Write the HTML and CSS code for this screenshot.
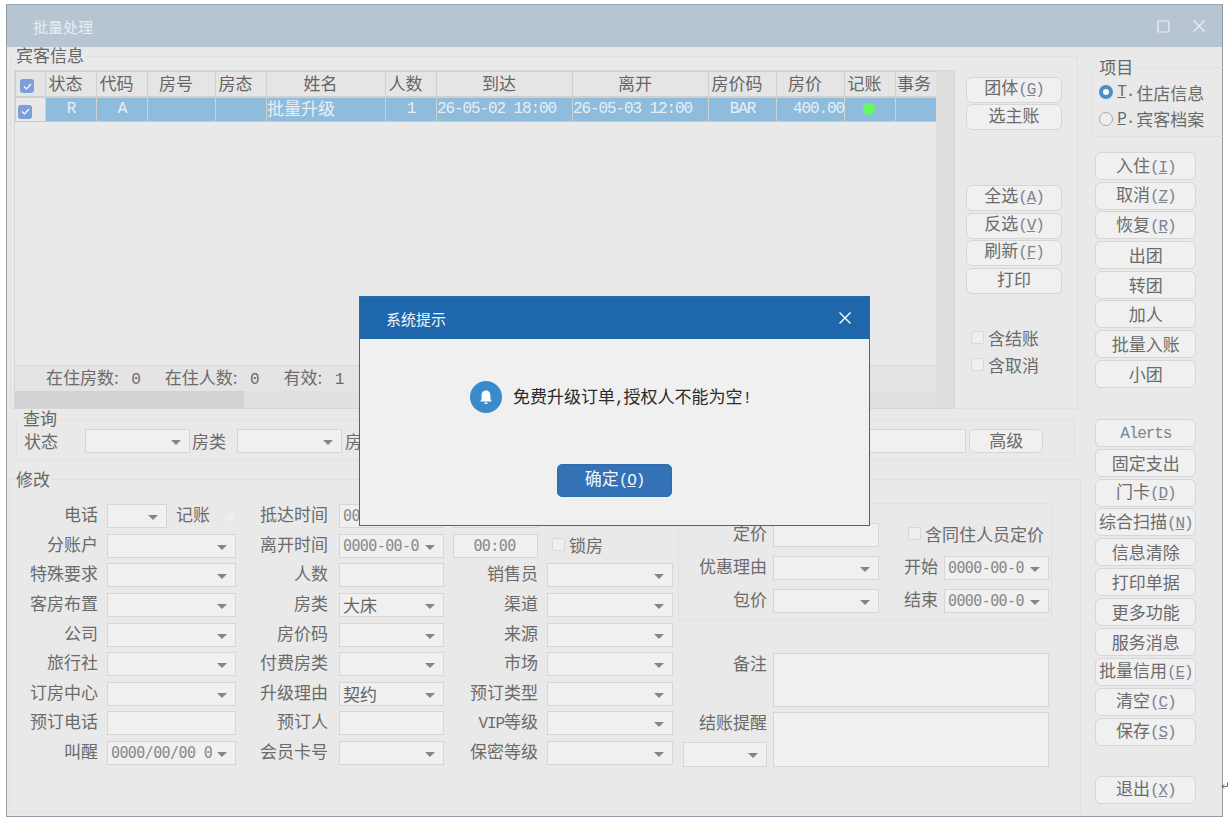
FILE: index.html
```html
<!DOCTYPE html>
<html>
<head>
	<meta charset="UTF-8">
	<title>批量处理</title>
	<link rel="stylesheet" href="styles.css">
</head>
<body>
<div class="win">
	<div class="titlebar">
		<span class="title">批量处理</span>
		<svg class="win-btn" width="13" height="13" viewBox="0 0 13 13"><rect x="1" y="1" width="11" height="11" rx="1" fill="none" stroke="#eef2f5" stroke-width="1.2"/></svg>
		<svg class="win-btn" width="14" height="14" viewBox="0 0 14 14"><path d="M1.5 1.5 L12.5 12.5 M12.5 1.5 L1.5 12.5" stroke="#eef2f5" stroke-width="1.2"/></svg>
	</div>
	<div class="content">
		<div class="left-col">
			<fieldset class="guest">
				<legend>宾客信息</legend>
				<div class="grid-box">
					<div class="grid-main">
						<table class="guest-table">
							<colgroup>
								<col class="w30"><col class="w51"><col class="w51"><col class="w68"><col class="w51"><col class="w119"><col class="w51"><col class="w136"><col class="w136"><col class="w68"><col class="w68"><col class="w51"><col class="w42">
							</colgroup>
							<thead>
								<tr>
									<th class="check-head"><span class="blue-check"><svg width="11" height="11" viewBox="0 0 11 11"><path d="M2 5.5 L4.5 8 L9 3" fill="none" stroke="#fff" stroke-width="1.2"/></svg></span></th>
									<th>状态</th><th>代码</th><th>房号</th><th>房态</th><th>姓名</th><th>人数</th><th>到达</th><th>离开</th><th>房价码</th><th>房价</th><th>记账</th><th class="last-head">事务</th>
								</tr>
							</thead>
							<tbody>
								<tr>
									<td class="check-cell"><span class="blue-check"><svg width="11" height="11" viewBox="0 0 11 11"><path d="M2 5.5 L4.5 8 L9 3" fill="none" stroke="#fff" stroke-width="1.2"/></svg></span></td>
									<td class="lt c">R</td><td class="lt c">A</td><td></td><td></td><td class="name">批量升级</td><td class="lt c">1</td>
									<td class="lt">26-05-02 18:00</td><td class="lt">26-05-03 12:00</td><td class="lt c">BAR</td><td class="lt r">400.00</td>
									<td class="dot-cell"><span class="green-dot"></span></td><td></td>
								</tr>
							</tbody>
						</table>
						<div class="grid-empty"></div>
						<div class="status-row">
							<span>在住房数:<span class="lt">&nbsp;0</span></span>
							<span>在住人数:<span class="lt">&nbsp;0</span></span>
							<span>有效:<span class="lt">&nbsp;1</span></span>
						</div>
						<div class="hscroll"><div class="hthumb"></div></div>
					</div>
					<div class="vscroll"></div>
				</div>
				<div class="side-col">
					<div class="btn-stack">
						<button class="btn side-btn">团体<span class="lt">(<u>G</u>)</span></button>
						<button class="btn side-btn">选主账</button>
					</div>
					<div class="btn-stack second">
						<button class="btn side-btn">全选<span class="lt">(<u>A</u>)</span></button>
						<button class="btn side-btn">反选<span class="lt">(<u>V</u>)</span></button>
						<button class="btn side-btn">刷新<span class="lt">(<u>F</u>)</span></button>
						<button class="btn side-btn">打印</button>
					</div>
					<div class="side-checks">
						<div class="check-row"><span class="check"></span>含结账</div>
						<div class="check-row"><span class="check"></span>含取消</div>
					</div>
				</div>
			</fieldset>

			<fieldset class="query">
				<legend>查询</legend>
				<div class="query-row">
					<span class="q-label">状态</span>
					<div class="ctl combo q-combo"></div>
					<span class="q-label q-label2">房类</span>
					<div class="ctl combo q-combo"></div>
					<span class="q-label q-label3">房号</span>
					<div class="ctl q-fill"></div>
					<button class="btn q-btn">高级</button>
				</div>
			</fieldset>

			<fieldset class="edit">
				<legend>修改</legend>
				<div class="edit-wrap">
					<div class="form-grid">
						<span class="lb">电话</span>
						<div class="phone-cell">
							<div class="ctl combo phone"></div>
							<span class="phone-txt">记账</span>
							<span class="white-dot"></span>
						</div>
						<span class="lb">抵达时间</span><div class="ctl combo date">0000-00-0</div>
						<div class="ctl date"></div><span></span>

						<span class="lb">分账户</span><div class="ctl combo"></div>
						<span class="lb">离开时间</span><div class="ctl combo date">0000-00-0</div>
						<div class="ctl date time">00:00</div>
						<div class="check-row lock"><span class="check"></span>锁房</div>

						<span class="lb">特殊要求</span><div class="ctl combo"></div>
						<span class="lb">人数</span><div class="ctl"></div>
						<span class="lb">销售员</span><div class="ctl combo"></div>

						<span class="lb">客房布置</span><div class="ctl combo"></div>
						<span class="lb">房类</span><div class="ctl combo dark">大床</div>
						<span class="lb">渠道</span><div class="ctl combo"></div>

						<span class="lb">公司</span><div class="ctl combo"></div>
						<span class="lb">房价码</span><div class="ctl combo"></div>
						<span class="lb">来源</span><div class="ctl combo"></div>

						<span class="lb">旅行社</span><div class="ctl combo"></div>
						<span class="lb">付费房类</span><div class="ctl combo"></div>
						<span class="lb">市场</span><div class="ctl combo"></div>

						<span class="lb">订房中心</span><div class="ctl combo"></div>
						<span class="lb">升级理由</span><div class="ctl combo dark">契约</div>
						<span class="lb">预订类型</span><div class="ctl combo"></div>

						<span class="lb">预订电话</span><div class="ctl"></div>
						<span class="lb">预订人</span><div class="ctl"></div>
						<span class="lb"><span class="lt">VIP</span>等级</span><div class="ctl combo"></div>

						<span class="lb">叫醒</span><div class="ctl combo date">0000/00/00 0</div>
						<span class="lb">会员卡号</span><div class="ctl combo"></div>
						<span class="lb">保密等级</span><div class="ctl combo"></div>
					</div>
					<div class="edit-right">
						<div class="price-panel">
							<span class="lb">定价</span><div class="ctl"></div>
							<div class="check-row same"><span class="check"></span>含同住人员定价</div>
							<span class="lb">优惠理由</span><div class="ctl combo"></div>
							<span class="lb">开始</span><div class="ctl combo date">0000-00-0</div>
							<span class="lb">包价</span><div class="ctl combo"></div>
							<span class="lb">结束</span><div class="ctl combo date">0000-00-0</div>
						</div>
						<div class="notes">
							<span class="lb top">备注</span><div class="ctl note"></div>
							<div class="remind">
								<span class="lb top">结账提醒</span>
								<div class="ctl combo small"></div>
							</div>
							<div class="ctl note"></div>
						</div>
					</div>
				</div>
			</fieldset>
		</div>

		<div class="right-col">
			<fieldset class="project">
				<legend>项目</legend>
				<div class="radio-row"><span class="radio on"></span><span class="lt"><u>T</u>.</span>住店信息</div>
				<div class="radio-row"><span class="radio"></span><span class="lt"><u>P</u>.</span>宾客档案</div>
			</fieldset>
			<div class="btn-col">
				<button class="btn">入住<span class="lt">(<u>I</u>)</span></button>
				<button class="btn">取消<span class="lt">(<u>Z</u>)</span></button>
				<button class="btn">恢复<span class="lt">(<u>R</u>)</span></button>
				<button class="btn">出团</button>
				<button class="btn">转团</button>
				<button class="btn">加人</button>
				<button class="btn">批量入账</button>
				<button class="btn">小团</button>
			</div>
			<div class="btn-col gap-top">
				<button class="btn"><span class="lt">Alerts</span></button>
				<button class="btn">固定支出</button>
				<button class="btn">门卡<span class="lt">(<u>D</u>)</span></button>
				<button class="btn">综合扫描<span class="lt">(<u>N</u>)</span></button>
				<button class="btn">信息清除</button>
				<button class="btn">打印单据</button>
				<button class="btn">更多功能</button>
				<button class="btn">服务消息</button>
				<button class="btn">批量信用<span class="lt">(<u>E</u>)</span></button>
				<button class="btn">清空<span class="lt">(<u>C</u>)</span></button>
				<button class="btn">保存<span class="lt">(<u>S</u>)</span></button>
			</div>
			<button class="btn exit">退出<span class="lt">(<u>X</u>)</span></button>
		</div>
	</div>

	<div class="dialog">
		<div class="dialog-head">
			<span>系统提示</span>
			<svg width="14" height="14" viewBox="0 0 14 14"><path d="M1.5 1.5 L12.5 12.5 M12.5 1.5 L1.5 12.5" stroke="#fff" stroke-width="1.4"/></svg>
		</div>
		<div class="dialog-msg">
			<span class="bell">
				<svg width="18" height="18" viewBox="0 0 18 18"><path d="M9 2.5 C5.8 2.5 4.6 5 4.6 7.5 V11 L3.2 13.6 H14.8 L13.4 11 V7.5 C13.4 5 12.2 2.5 9 2.5 Z" fill="#fff"/><path d="M7.2 14.6 H10.8 C10.6 15.7 9.9 16.2 9 16.2 C8.1 16.2 7.4 15.7 7.2 14.6 Z" fill="#fff"/></svg>
			</span>
			<span class="msg-text">免费升级订单<span class="lt">,</span>授权人不能为空<span class="lt">!</span></span>
		</div>
		<div class="dialog-foot">
			<button class="ok-btn">确定<span class="lt">(<u>O</u>)</span></button>
		</div>
	</div>

	<svg class="grip" width="8" height="8" viewBox="0 0 8 8"><path d="M6.5 0.5 V4.5 H1 M3 2.5 L1 4.5 L3 6.5" fill="none" stroke="#666" stroke-width="1"/></svg>
</div>
</body>
</html>
```

FILE: styles.css
```css
* {
	box-sizing: border-box;
}

body {
	margin: 0;
	background: #fff;
	font-family: "Noto Sans CJK SC", sans-serif;
	font-size: 17px;
	color: #6b6b6b;
	overflow: hidden;
}

.lt {
	font-family: "Liberation Mono", monospace;
	font-size: 16px;
	letter-spacing: -1.1px;
}

.win {
	position: relative;
	width: 1217px;
	height: 813px;
	margin: 4px 0 0 6px;
	border: 1px solid #929ca6;
	border-top-color: #9aa5b0;
	background: #e9e9e9;
	display: flex;
	flex-direction: column;
}

.titlebar {
	height: 42px;
	background: #b7c5d3;
	display: flex;
	align-items: center;
	padding: 0 16px 0 26px;
	flex: none;
}

.title {
	flex: 1;
	font-size: 15px;
	color: #e8edf1;
}

.win-btn {
	margin-left: 22px;
}

.content {
	flex: 1;
	display: flex;
	min-height: 0;
}

.left-col {
	width: 1074px;
	margin-left: 2px;
	display: flex;
	flex-direction: column;
	padding-bottom: 3px;
}

fieldset {
	margin: 0;
	padding: 0;
	border: 1px solid #e1e1e1;
	min-width: 0;
}

legend {
	padding: 0 1px;
	margin-left: 1px;
	height: 18px;
	line-height: 16px;
	color: #666;
}

/* guest block */
.guest {
	height: 362px;
	margin-left: 1px;
	margin-right: 3px;
	padding: 5px 0 0 3px;
	display: flex;
	gap: 11px;
}

.grid-box {
	width: 941px;
	height: 339px;
	display: flex;
	border: 1px solid #d6d6d6;
}

.grid-main {
	flex: 1;
	display: flex;
	flex-direction: column;
	min-width: 0;
}

.vscroll {
	width: 18px;
	background: #dedede;
}

.guest-table {
	border-collapse: collapse;
	table-layout: fixed;
	width: 921px;
}

.w30 { width: 30px; }
.w42 { width: 42px; }
.w51 { width: 51px; }
.w68 { width: 68px; }
.w119 { width: 119px; }
.w136 { width: 136px; }

.guest-table th,
.guest-table td {
	padding: 0;
	height: 25px;
	border: 1px solid #d0d0d0;
	font-weight: normal;
	white-space: nowrap;
}

.guest-table th {
	background: #e5e5e5;
	border-bottom-width: 2px;
	text-align: center;
	color: #666;
	line-height: 20px;
	padding: 0 11px 2px 0;
}

.guest-table th.check-head {
	padding: 0 7px 0 0;
}

.guest-table th.last-head {
	padding-right: 5px;
}

.guest-table td {
	background: #8fbbdd;
	color: #e6eff6;
	line-height: 20px;
	border-bottom-color: #c4ccd2;
}

.guest-table td.name {
	padding-bottom: 3px;
}

.guest-table .check-cell {
	background: #e9e9e9;
	text-align: center;
	padding-right: 11px;
}

.guest-table td.c,
.guest-table td.dot-cell {
	text-align: center;
}

.guest-table td.r {
	text-align: right;
}

.blue-check {
	display: inline-flex;
	align-items: center;
	justify-content: center;
	width: 14px;
	height: 14px;
	border-radius: 3px;
	background: #7c9fdc;
	vertical-align: middle;
}

.green-dot {
	display: inline-block;
	width: 12px;
	height: 12px;
	margin: 0 2px 5px 0;
	border-radius: 50%;
	background: #66fb5c;
	vertical-align: middle;
}

.grid-empty {
	flex: 1;
}

.status-row {
	height: 26px;
	background: #e4e4e4;
	border-top: 1px solid #d6d6d6;
	padding: 0 0 4px 31px;
	display: flex;
	gap: 25px;
	align-items: center;
}

.status-row .lt {
	padding-left: 4px;
}

.hscroll {
	height: 17px;
	background: #e0e0e0;
}

.hthumb {
	width: 229px;
	height: 100%;
	background: #d2d2d2;
}

.side-col {
	width: 96px;
	padding-top: 7px;
}

.btn-stack {
	display: flex;
	flex-direction: column;
	gap: 1px;
}

.btn-stack.second {
	margin-top: 55px;
	gap: 1.7px;
}

.side-checks {
	margin-top: 30px;
	padding-left: 5px;
}

.check-row {
	display: flex;
	align-items: center;
	height: 27px;
	gap: 4px;
	white-space: nowrap;
}

.check {
	width: 13px;
	height: 13px;
	border: 1px solid #d8d8d8;
	border-radius: 2px;
	background: #efefef;
	flex: none;
}

.btn {
	display: block;
	width: 100%;
	height: 28px;
	padding: 0;
	border: 1px solid #d6d6d6;
	border-radius: 6px;
	background: #f0f0f0;
	font-family: inherit;
	font-size: 17px;
	line-height: 22px;
	color: #6b6b6b;
	white-space: nowrap;
}

.btn .lt {
	color: #7c8492;
}

.side-btn {
	height: 26px;
	padding-bottom: 4px;
	line-height: 18px;
}

/* query block */
.query {
	height: 50px;
	margin: 1px 6px 0 7px;
	padding: 1px 0 0 7px;
}

.query legend {
	margin-left: -2px;
}

.query-row {
	display: flex;
	align-items: center;
	height: 24px;
}

.q-label {
	width: 61px;
	line-height: 20px;
	padding-bottom: 1px;
}

.q-label2 {
	width: 47px;
	padding-left: 2px;
}

.q-label3 {
	width: 37px;
	padding-left: 3px;
}

.q-combo {
	width: 105px;
}

.q-fill {
	flex: 1;
}

.q-btn {
	width: 74px;
	height: 24px;
	padding-bottom: 3px;
	line-height: 18px;
	margin: 0 31px 0 3px;
}

.ctl {
	height: 24px;
	min-width: 0;
	border: 1px solid #d6d6d6;
	background: #f0f0f0;
	position: relative;
	line-height: 22px;
	padding-left: 3px;
	white-space: nowrap;
}

.combo::after {
	content: "";
	position: absolute;
	right: 8px;
	top: 10px;
	border-left: 5px solid transparent;
	border-right: 5px solid transparent;
	border-top: 5px solid #858585;
}

.date {
	font-family: "DejaVu Sans Mono", monospace;
	font-size: 15px;
	letter-spacing: -0.6px;
	color: #8a8a8a;
}

.date.combo {
	padding-right: 18px;
}

.time {
	text-align: center;
	padding-right: 5px;
}

.dark {
	color: #666;
}

/* edit block */
.edit {
	flex: 1;
	margin: 10px 0 0 0;
	padding: 16px 0 0 0;
}

.edit legend {
	margin-left: 5px;
	line-height: 18px;
}

.edit-wrap {
	display: flex;
	gap: 5px;
}

.form-grid {
	display: grid;
	grid-template-columns: 88px 129px 85px 105px 85px 126px;
	grid-auto-rows: 29.65px;
	column-gap: 9px;
	width: 663px;
	flex: none;
}

.lb {
	text-align: right;
	line-height: 20px;
	white-space: nowrap;
}

.form-grid > .lb:nth-child(6n+3) {
	padding-right: 2px;
}

.phone-cell {
	display: flex;
	align-items: flex-start;
}

.phone {
	width: 60px;
	flex: none;
}

.phone-txt {
	margin-left: 9px;
	line-height: 20px;
}

.white-dot {
	width: 8px;
	height: 8px;
	margin: 9px 0 0 17px;
	border-radius: 50%;
	background: #efefef;
}

.lock {
	height: 24px;
	padding: 0 0 3px 5px;
}

.edit-right {
	width: 374px;
}

.price-panel {
	height: 117px;
	border: 1px solid #e1e1e1;
	padding-top: 19px;
	display: grid;
	grid-template-columns: 88px 106px 53px 105px;
	grid-auto-rows: 33px;
	column-gap: 6px;
	margin-top: -1px;
}

.price-panel .ctl {
	height: 24px;
}

.same {
	grid-column: 3 / 5;
	padding: 0 0 3px 23px;
	height: 24px;
	gap: 4px;
}

.notes {
	margin-top: 33px;
	display: grid;
	grid-template-columns: 89px 276px;
	grid-template-rows: 54px 55px;
	column-gap: 6px;
	row-gap: 5px;
}

.ctl.note {
	height: 100%;
}

.remind {
	display: flex;
	flex-direction: column;
	justify-content: space-between;
}

.ctl.small {
	width: 84px;
	height: 25px;
	align-self: flex-end;
}

/* right column */
.right-col {
	width: 130px;
	margin-left: 11px;
	padding-top: 11px;
	display: flex;
	flex-direction: column;
}

.project {
	height: 79px;
	margin-right: -1px;
	border-right: none;
	padding: 3px 0 0 6px;
}

.project legend {
	margin-left: -1px;
	line-height: 18px;
}

.radio-row {
	display: flex;
	align-items: center;
	height: 26.5px;
	white-space: nowrap;
}

.radio-row .lt {
	margin-right: 2px;
}

.radio {
	width: 14px;
	height: 14px;
	margin-right: 4px;
	border: 1px solid #aaa;
	border-radius: 50%;
	background: #efefef;
}

.radio.on {
	border: 4px solid #4a8dcb;
	background: #fff;
}

.btn-col {
	width: 101px;
	margin: 15px 0 0 3px;
	display: flex;
	flex-direction: column;
	gap: 1.7px;
}

.btn-col.gap-top {
	margin-top: 31px;
	gap: 1.9px;
}

.exit {
	width: 101px;
	margin: 30px 0 0 3px;
}

/* message dialog */
.dialog {
	position: absolute;
	left: 352px;
	top: 291px;
	width: 511px;
	height: 230px;
	border: 1px solid #2a6cab;
	background: #f0f0f0;
	display: flex;
	flex-direction: column;
}

.dialog-head {
	height: 42px;
	background: #1f67ad;
	color: #eef4fa;
	font-size: 15px;
	display: flex;
	align-items: center;
	justify-content: space-between;
	padding: 0 17px 0 26px;
	flex: none;
}

.dialog-msg {
	margin-top: 42px;
	padding-left: 110px;
	display: flex;
	align-items: center;
	gap: 11px;
	line-height: 32px;
	color: #2b2b2b;
}

.msg-text {
	height: 32px;
	padding-top: 3px;
	line-height: 24px;
}

.bell {
	width: 32px;
	height: 32px;
	border-radius: 50%;
	background: #3a8bcb;
	display: flex;
	align-items: center;
	justify-content: center;
}

.dialog-foot {
	margin-top: 51px;
	text-align: center;
}

.ok-btn {
	width: 115px;
	height: 33px;
	padding: 0 0 3px;
	border: 1px solid #2f6cab;
	border-radius: 5px;
	background: #3272b5;
	color: #f2f6fa;
	font-family: inherit;
	font-size: 17px;
	line-height: 22px;
}

.grip {
	position: absolute;
	right: -7px;
	bottom: 26px;
}
```
